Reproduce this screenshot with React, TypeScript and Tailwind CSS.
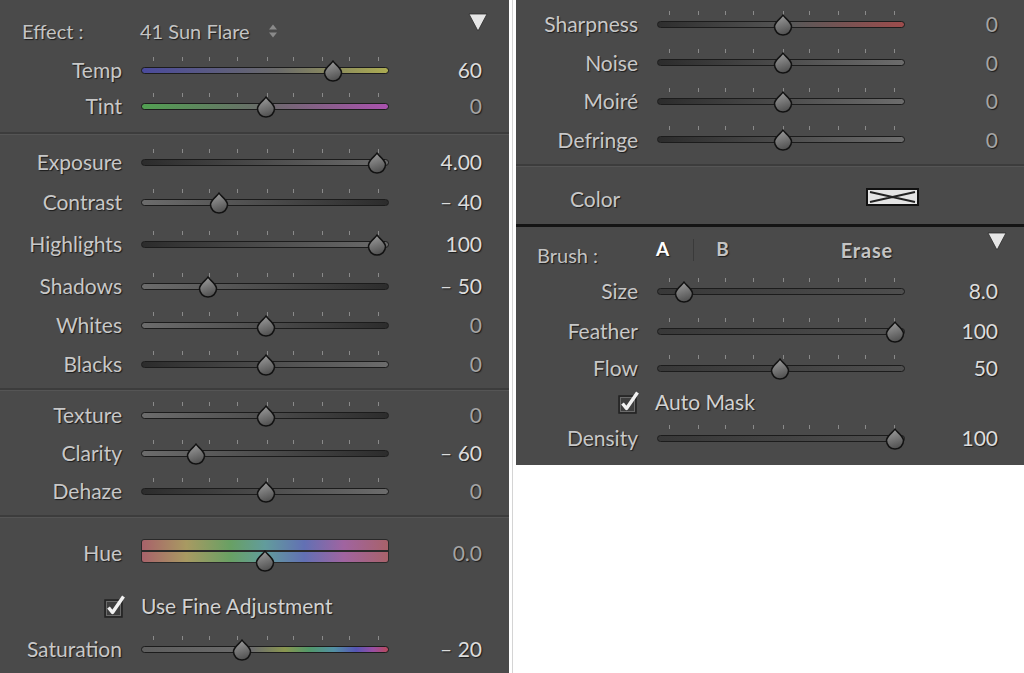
import React from 'react'

const TICKS = [12, 41, 68, 96, 126, 152, 181, 208, 237]

const TRACKS = {
  temp: 'bg-[linear-gradient(90deg,#4a4a9c,#6a6a6a_55%,#acac52)]',
  tint: 'bg-[linear-gradient(90deg,#52a052,#6a6a6a_50%,#aa52ae)]',
  up: 'bg-[linear-gradient(90deg,#2c2c2c,#6c6c6c)]',
  down: 'bg-[linear-gradient(90deg,#6c6c6c,#2c2c2c)]',
  flat: 'bg-[linear-gradient(90deg,#383838,#4e4e4e)]',
  sat: 'bg-[linear-gradient(90deg,#5e5e5e,#6c6c6c_45%,#8a9650_58%,#52986a_68%,#5290a4_78%,#5656b4_87%,#9a4ea2_94%,#b84a5c)]',
  sharp: 'bg-[linear-gradient(90deg,#2e2e2e,#585858_55%,#9c4c4c)]',
}

const shadow = '[text-shadow:1px_1px_1px_#1c1c1c]'

function Thumb({ left, top }: { left: number; top: number }) {
  return (
    <svg
      width="20"
      height="22"
      viewBox="0 0 20 22"
      className="absolute"
      style={{ left: left - 10, top }}
    >
      <defs>
        <linearGradient id="thumbFill" x1="0" y1="0" x2="0.3" y2="1">
          <stop offset="0" stopColor="#a2a2a2" />
          <stop offset="1" stopColor="#555555" />
        </linearGradient>
      </defs>
      <path
        d="M10 1.2 C11.8 4 18.5 8 18.5 12.6 A8.5 8.5 0 0 1 1.5 12.6 C1.5 8 8.2 4 10 1.2 Z"
        fill="url(#thumbFill)"
        stroke="#121212"
        strokeWidth="1.5"
      />
    </svg>
  )
}

function Track({ pos, track }: { pos: number; track: string }) {
  return (
    <div className="relative w-[248px] h-[7px]">
      {TICKS.map((t) => (
        <div
          key={t}
          className="absolute top-[-10px] w-px h-[4px] bg-[#8a8a8a]"
          style={{ left: t }}
        />
      ))}
      <div className={`absolute inset-0 rounded-full border border-[#1c1c1c] ${track}`} />
      <Thumb left={pos} top={-7} />
    </div>
  )
}

function HueTrack({ pos }: { pos: number }) {
  return (
    <div className="relative w-[248px] h-[24px] -mt-[4px]">
      <div className="absolute inset-0 rounded-[3px] border border-[#2a2a2a] bg-[linear-gradient(90deg,#a8626a,#a89a62_18%,#68a064_36%,#629c9c_50%,#6270b4_66%,#a064a0_82%,#a8626a)]" />
      <div className="absolute left-0 right-0 top-[11px] h-[2px] bg-[#2a2a2a]" />
      <Thumb left={pos} top={11} />
    </div>
  )
}

type Row = {
  label: string
  value: string
  pos: number
  track: string
  h: string
  dim?: boolean
  hue?: boolean
}

function Slider({ label, value, pos, track, h, dim, hue }: Row) {
  return (
    <div className={`flex items-center ${h}`}>
      <div className={`w-[122px] text-right text-[21px] text-[#c8c8c8] whitespace-nowrap ${shadow}`}>
        {label}
      </div>
      <div className="ml-[19px]">
        {hue ? <HueTrack pos={pos} /> : <Track pos={pos} track={track} />}
      </div>
      <div
        className={`w-[93px] text-right text-[21px] ${shadow} ${
          dim ? 'text-[#a4a4a4]' : 'text-[#dcdcdc]'
        }`}
      >
        {value}
      </div>
    </div>
  )
}

function Divider() {
  return <div className="h-[3px] bg-[#3c3c3c] border-b border-[#555555]" />
}

function Triangle() {
  return (
    <svg width="20" height="19" viewBox="0 0 20 19">
      <path d="M1 1 L19 1 L10 18 Z" fill="#e6e6e6" stroke="#2a2a2a" strokeWidth="0.8" />
    </svg>
  )
}

function Check({ label }: { label: string }) {
  return (
    <>
      <svg width="24" height="24" viewBox="0 0 24 24">
        <rect x="1" y="6" width="17" height="17" fill="#3e3e3e" stroke="#222222" strokeWidth="1.5" />
        <rect x="2.5" y="7.5" width="14" height="14" fill="none" stroke="#6a6a6a" strokeWidth="1" />
        <path
          d="M4.5 13.5 L8.5 18.5 L19.5 2.5"
          fill="none"
          stroke="#f2f2f2"
          strokeWidth="3.4"
          strokeLinejoin="round"
        />
      </svg>
      <span className={`ml-[13px] text-[21px] text-[#d2d2d2] ${shadow}`}>{label}</span>
    </>
  )
}

const LEFT_A: Row[] = [
  { label: 'Temp', value: '60', pos: 192, track: TRACKS.temp, h: 'h-[40px]' },
  { label: 'Tint', value: '0', pos: 125, track: TRACKS.tint, h: 'h-[32px]', dim: true },
]

const LEFT_B: Row[] = [
  { label: 'Exposure', value: '4.00', pos: 236, track: TRACKS.up, h: 'h-[40px]' },
  { label: 'Contrast', value: '– 40', pos: 78, track: TRACKS.down, h: 'h-[40px]' },
  { label: 'Highlights', value: '100', pos: 236, track: TRACKS.up, h: 'h-[44px]' },
  { label: 'Shadows', value: '– 50', pos: 67, track: TRACKS.down, h: 'h-[40px]' },
  { label: 'Whites', value: '0', pos: 125, track: TRACKS.down, h: 'h-[38px]', dim: true },
  { label: 'Blacks', value: '0', pos: 125, track: TRACKS.up, h: 'h-[40px]', dim: true },
]

const LEFT_C: Row[] = [
  { label: 'Texture', value: '0', pos: 125, track: TRACKS.down, h: 'h-[38px]', dim: true },
  { label: 'Clarity', value: '– 60', pos: 55, track: TRACKS.down, h: 'h-[38px]' },
  { label: 'Dehaze', value: '0', pos: 125, track: TRACKS.up, h: 'h-[38px]', dim: true },
]

const RIGHT_A: Row[] = [
  { label: 'Sharpness', value: '0', pos: 126, track: TRACKS.sharp, h: 'h-[38px]', dim: true },
  { label: 'Noise', value: '0', pos: 126, track: TRACKS.up, h: 'h-[39px]', dim: true },
  { label: 'Moiré', value: '0', pos: 126, track: TRACKS.up, h: 'h-[38px]', dim: true },
  { label: 'Defringe', value: '0', pos: 126, track: TRACKS.up, h: 'h-[39px]', dim: true },
]

export default function App() {
  return (
    <div className="flex w-[1024px] h-[673px] bg-white font-['Lato',sans-serif] overflow-hidden">
      {/* left panel */}
      <div className="w-[509px] h-[673px] bg-[#4a4a4a] flex flex-col">
        <div className="h-[12px]" />
        <div className="flex items-center h-[38px]">
          <div className={`w-[140px] pl-[22px] text-[20px] text-[#c4c4c4] ${shadow}`}>Effect :</div>
          <div className={`text-[20px] text-[#c4c4c4] ${shadow}`}>41 Sun Flare</div>
          <svg width="10" height="16" viewBox="0 0 10 16" className="ml-[18px]">
            <path d="M1 6.5 L5 1.5 L9 6.5 Z M1 9.5 L5 14.5 L9 9.5 Z" fill="#8a8a8a" />
          </svg>
          <div className="ml-auto mr-[21px] -translate-y-[9px]">
            <Triangle />
          </div>
        </div>
        {LEFT_A.map((r) => (
          <Slider key={r.label} {...r} />
        ))}
        <div className="h-[10px]" />
        <Divider />
        <div className="h-[7px]" />
        {LEFT_B.map((r) => (
          <Slider key={r.label} {...r} />
        ))}
        <div className="h-[4px]" />
        <Divider />
        <div className="h-[5px]" />
        {LEFT_C.map((r) => (
          <Slider key={r.label} {...r} />
        ))}
        <div className="h-[5px]" />
        <Divider />
        <div className="h-[15px]" />
        <Slider label="Hue" value="0.0" pos={124} track="" h="h-[40px]" dim hue />
        <div className="flex items-center h-[46px] mt-[10px] pl-[104px]">
          <Check label="Use Fine Adjustment" />
        </div>
        <Slider label="Saturation" value="– 20" pos={101} track={TRACKS.sat} h="h-[40px]" />
      </div>

      {/* gap */}
      <div className="w-[7px] flex justify-center">
        <div className="w-px h-full bg-[#d4d4d4]" />
      </div>

      {/* right panel */}
      <div className="w-[508px] h-[465px] bg-[#4a4a4a] flex flex-col">
        <div className="h-[5px]" />
        {RIGHT_A.map((r) => (
          <Slider key={r.label} {...r} />
        ))}
        <div className="h-[5px]" />
        <Divider />
        <div className="flex items-center h-[57px] pt-[7px]">
          <div className={`w-[350px] pl-[54px] text-[21px] text-[#c8c8c8] ${shadow}`}>Color</div>
          <div className="w-[53px] h-[18px] border-2 border-[#111111] bg-[#e4e4e4] -translate-y-[2px]">
            <svg width="49" height="14" viewBox="0 0 49 14" className="block">
              <path d="M2 2 L47 12 M2 12 L47 2" stroke="#222222" strokeWidth="2" />
            </svg>
          </div>
        </div>
        <div className="h-[3px] bg-[#141414]" />
        <div className="h-[9px]" />
        <div className="flex items-center h-[37px]">
          <div className={`w-[140px] pl-[21px] text-[20px] text-[#c4c4c4] ${shadow}`}>Brush :</div>
          <div className="flex items-center -translate-y-[5px]">
            <span className={`text-[19px] font-bold text-white ${shadow}`}>A</span>
            <span className="ml-[24px] w-px h-[22px] bg-[#3a3a3a]" />
            <span className={`ml-[22px] text-[19px] font-bold text-[#c4c4c4] ${shadow}`}>B</span>
            <span
              className={`ml-[112px] text-[20px] font-bold tracking-[0.8px] text-[#c4c4c4] ${shadow}`}
            >
              Erase
            </span>
          </div>
          <div className="ml-auto mr-[17px] -translate-y-[13px]">
            <Triangle />
          </div>
        </div>
        <Slider label="Size" value="8.0" pos={27} track={TRACKS.flat} h="h-[36px]" />
        <Slider label="Feather" value="100" pos={238} track={TRACKS.flat} h="h-[44px]" />
        <Slider label="Flow" value="50" pos={123} track={TRACKS.flat} h="h-[30px]" />
        <div className="flex items-center h-[38px] pl-[102px]">
          <Check label="Auto Mask" />
        </div>
        <Slider label="Density" value="100" pos={238} track={TRACKS.flat} h="h-[34px]" />
      </div>
    </div>
  )
}
